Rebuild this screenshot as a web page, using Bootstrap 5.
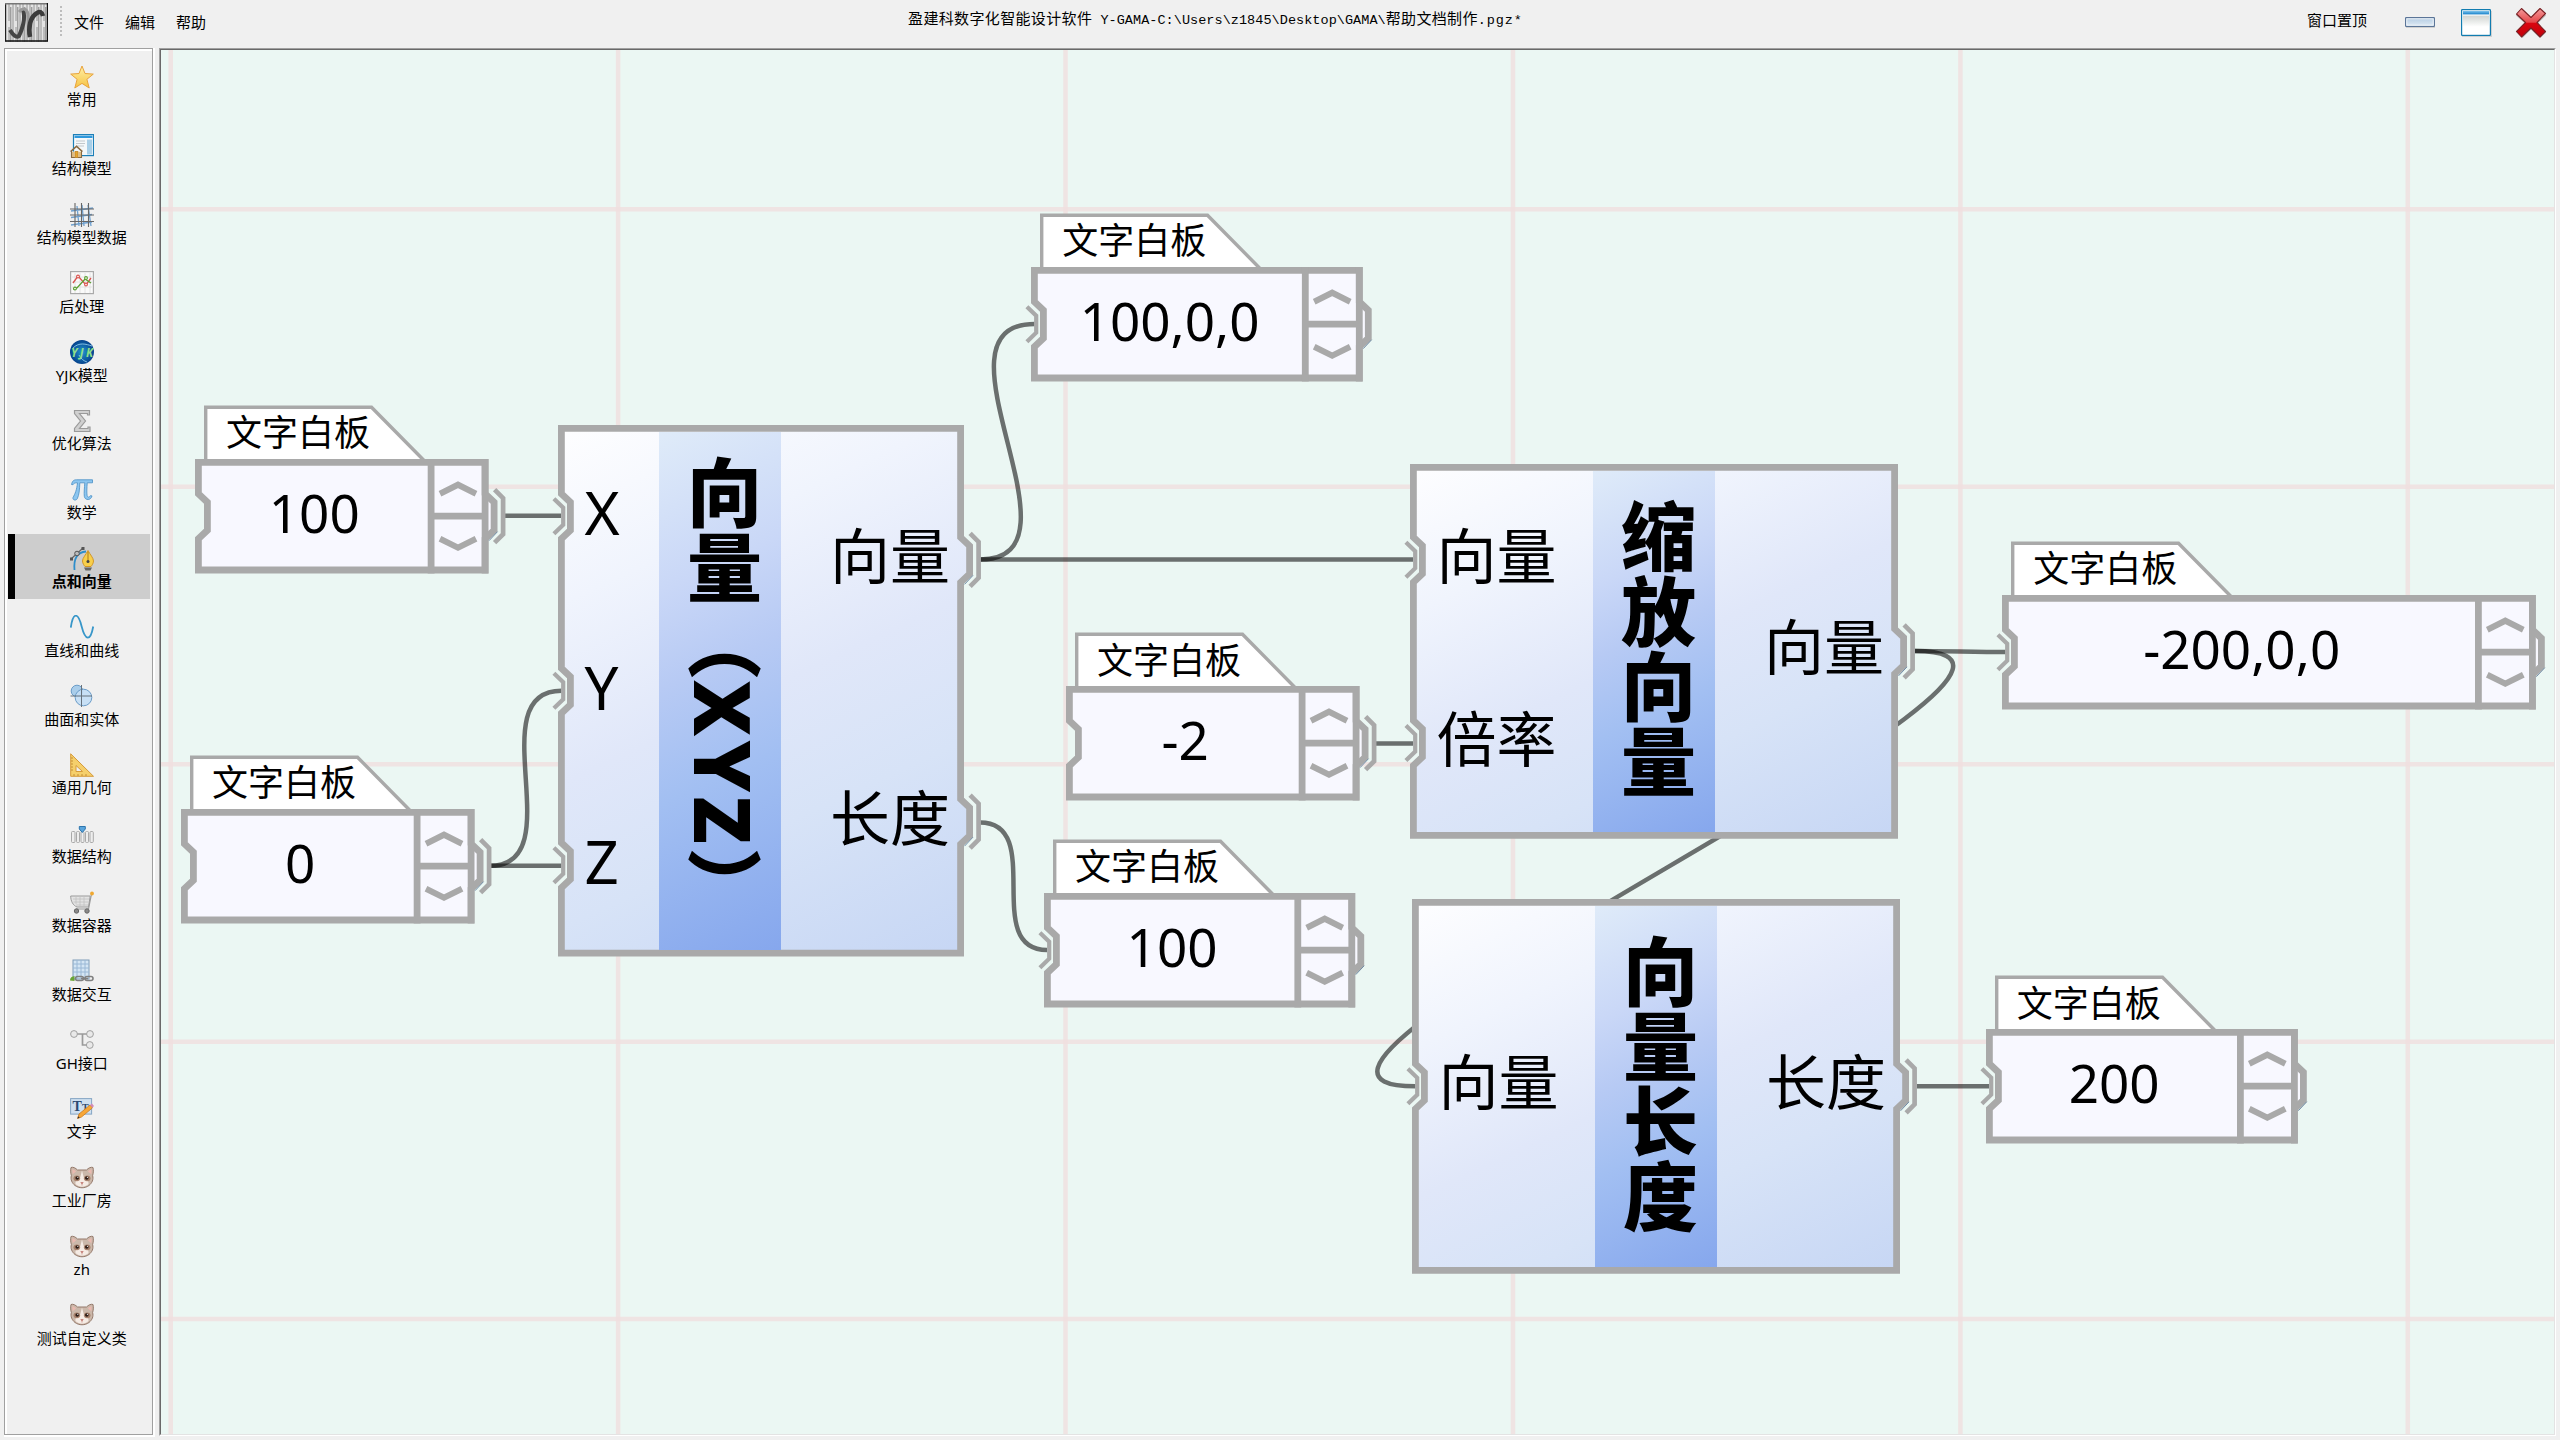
<!DOCTYPE html>
<html lang="zh-CN">
<head>
<meta charset="utf-8">
<meta name="viewport" content="width=device-width, initial-scale=1">
<title>Y-GAMA</title>
<link rel="stylesheet" href="https://cdn.jsdelivr.net/npm/bootstrap@5.3.0/dist/css/bootstrap.min.css">
<style>
  body { background:#f0f0f0; color:#000; font-family:"Noto Sans","Noto Sans CJK SC",sans-serif; font-size:15px; line-height:16px; width:2560px; height:1440px; }
  .titlebar { height:48px; flex:none; padding:3px 10px 0 5px; }
  .app-logo { width:43px; height:39px; }
  .grip { width:2px; height:31px; margin:3px 12px 0 12px; background:repeating-linear-gradient(#bdbdbd 0 2px,transparent 2px 4px); }
  .menu-item { padding:11px 0 0; margin-right:21px; }
  .doc-title { flex:1; padding:9.5px 0 0 702px; font-family:"Liberation Mono","Noto Sans CJK SC",monospace; font-size:13.5px; letter-spacing:.05px; white-space:pre; }
  .doc-title .han { font-size:15px; letter-spacing:.35px; }
  .doc-title .ext { letter-spacing:.9px; }
  .pin-top { padding-top:9px; margin-right:37px; }
  .side-panel { width:149px; margin-left:4px; margin-bottom:5px; border:1px solid #a0a0a0; box-shadow:inset 1px 1px 0 1px #fff,1px 1px 0 1px #fff; padding:3.4px 2px 0 3px; }
  .side-item { height:64.8px; margin-bottom:4px; border-left:7px solid transparent; padding:12.6px 1.5px 0 0; flex:none; white-space:nowrap; }
  .side-item svg { width:24px; height:24px; margin-bottom:2.4px; }
  .side-item.active { background:#cdcdcd; border-left-color:#000; font-weight:700; }
  .board-frame { margin:0 4px 4px 6px; border:1px solid; border-color:#a0a0a0 #fff #fff #a0a0a0; flex:1; }
  .board-canvas { border:1px solid; border-color:#696969 #e3e3e3 #e3e3e3 #696969; background:#ebf7f3; overflow:hidden; position:relative; height:100%; }
  .wires { position:absolute; inset:0; width:100%; height:100%; }
  .gnode { position:absolute; font-size:60px; line-height:64px; }
  .gnode > svg { position:absolute; left:0; top:0; width:100%; height:100%; overflow:visible; }
  .gnode .layer { position:relative; height:100%; }
  .gnode .port-col { padding:0 14px 8px 26.5px; }
  .gnode .band { width:122px; margin:6.8px 0; background:linear-gradient(155deg,#dfebf9,#c9d7f7 28%,#b7caf4 45%,#a2bff2 65%,#86a7ed); writing-mode:vertical-rl; font-family:"Noto Sans CJK SC",sans-serif; font-weight:900; font-size:75px; line-height:122px; padding-bottom:5px; }
  .gnode .band span { position:relative; left:4px; }
  .gnode .band .latin { left:0; font-family:"Noto Sans",sans-serif; font-size:78px; letter-spacing:4px; line-height:1; }
  .tnode-tab { position:absolute; left:31px; top:-50.5px; line-height:50px; font-size:36px; white-space:nowrap; }
  .tnode-value { font-size:53px; line-height:60px; padding-bottom:6px; margin-right:55px; }
</style>
</head>
<body class="d-flex flex-column overflow-hidden">

<header class="titlebar d-flex align-items-start">
  <svg class="app-logo" viewBox="0 0 43 39">
    <defs><pattern id="brush" width="7" height="39" patternUnits="userSpaceOnUse"><path d="M1 0V39M4 0V18M4 24V39" stroke="#8c8c8c" stroke-width=".9"/><path d="M5.8 4V39" stroke="#555" stroke-width=".7"/></pattern></defs>
    <rect width="43" height="39" fill="#e4e4e4"/><rect width="43" height="39" fill="url(#brush)"/>
    <path d="M18 7c3 8-1 20-4 26-3 2-6-1-9-6" fill="none" stroke="#444" stroke-width="4"/>
    <path d="M14 9c4-5 8-3 9 2l1 21" fill="none" stroke="#999" stroke-width="3"/>
    <path d="M25 34c-2-9 0-20 7-24 3-2 5-1 6 3" fill="none" stroke="#3c3c3c" stroke-width="4.5"/>
    <path d="M.5 38V.5" stroke="#222" stroke-width="1"/><path d="M0 .7H43" stroke="#777" stroke-width="1.6"/><path d="M42.5 0V38H0" fill="none" stroke="#111" stroke-width="1.4"/>
  </svg>
  <div class="grip"></div>
  <nav class="d-flex">
    <span class="menu-item">文件</span><span class="menu-item">编辑</span><span class="menu-item me-0">帮助</span>
  </nav>
  <div class="doc-title"><span class="han">盈建科数字化智能设计软件</span> Y-GAMA-C:\Users\z1845\Desktop\GAMA\<span class="han">帮助文档制作</span><span class="ext">.pgz*</span></div>
  <span class="pin-top">窗口置顶</span>
  <svg width="146" height="42" viewBox="2404 3 146 42">
    <defs>
      <linearGradient id="gMin" x2="0" y2="1"><stop stop-color="#b3cbe2"/><stop offset="1" stop-color="#dfeaf5"/></linearGradient>
      <linearGradient id="gWin" x2="0" y2="1"><stop stop-color="#d0d4d1"/><stop offset=".6" stop-color="#fff"/></linearGradient>
      <linearGradient id="gBar" x2="0" y2="1"><stop stop-color="#7fc4ee"/><stop offset="1" stop-color="#1480c8"/></linearGradient>
      <linearGradient id="gX" x2="0" y2="1"><stop stop-color="#f49a9a"/><stop offset=".48" stop-color="#e5474a"/><stop offset=".52" stop-color="#d90510"/><stop offset="1" stop-color="#c2000a"/></linearGradient>
    </defs>
    <rect x="2406" y="18.5" width="29" height="9.5" fill="#bbb" opacity=".6"/>
    <rect x="2405.6" y="17.6" width="28.8" height="8.8" rx=".6" fill="url(#gMin)" stroke="#5b7598" stroke-width="1.2"/><rect x="2406.8" y="18.8" width="26.4" height="6.4" fill="none" stroke="#f3f8fc" stroke-width=".9"/>
    <rect x="2462" y="11" width="30" height="26" fill="#bbb" opacity=".6"/>
    <rect x="2461.6" y="9.6" width="28.8" height="25.8" rx=".6" fill="#fff" stroke="#127cb0" stroke-width="1.2"/><rect x="2463" y="11" width="26" height="3.4" fill="url(#gBar)"/><rect x="2463" y="15.6" width="26" height="18.6" fill="url(#gWin)"/>
    <path d="M2522.5 9.500L2531 18l9-8.500 6 6-8.800 8.500 8.800 8.500-6 5.500-9-8.500-8.500 8.500-6.500-6 9-8.500-9-8z" fill="#888" opacity=".5"/>
    <path d="M2521.500 8.500L2531 17.500l9-9 5.500 5-8.500 9 8.500 9-5.500 5.500-9-9-9.500 9-5-5.500 9-9-9-8.500z" fill="url(#gX)" stroke="#7a2024" stroke-width="1.100" stroke-linejoin="round"/>
  </svg>
</header>

<main class="d-flex flex-fill">
  <aside class="side-panel d-flex flex-column flex-shrink-0">
    <div class="side-item d-flex flex-column align-items-center"><svg viewBox="0 0 24 24"><defs><linearGradient id="gStar" x2="0" y2="1"><stop stop-color="#fff0a8"/><stop offset="1" stop-color="#f6c343"/></linearGradient></defs><path d="M12 1l3 7.500 8.300.6-6.400 5.200 2.300 8.700-7.200-4.600L4.800 23l2.300-8.700L.7 9.100 9 8.500z" fill="url(#gStar)" stroke="#e8a33d" stroke-linejoin="round"/></svg><span>常用</span></div>
    <div class="side-item d-flex flex-column align-items-center"><svg viewBox="0 0 24 24"><rect x="3.500" y=".6" width="20" height="21" fill="#f5f8fa" stroke="#1c7fb8" stroke-width="1.200"/><path d="M4.500 2.800h18" stroke="#2f98dc" stroke-width="2.400"/><rect x="17" y="5.500" width="5" height="15" fill="#a8cfe8"/><path d="M6 7h9M6 9.500h9M6 12h8" stroke="#c3c8cc"/><path d="M.5 17.500L6.500 12l6 5.500M1.500 17v6.500h10V17L6.500 12.500z" fill="#f3e3c4" stroke="#8a6a42" stroke-width="1.100"/><path d="M5 23.500v-6h3v6M3 18v5M10 18v5" fill="#e5a530" stroke="#c08426" stroke-width=".8"/></svg><span>结构模型</span></div>
    <div class="side-item d-flex flex-column align-items-center"><svg viewBox="0 0 24 24"><g fill="none" stroke="#6ea0cf" stroke-width="1.300"><path d="M1 8l22-3M1 14.500l21-3M1 22l21-3M7 3l2 20M12 2l2 21M18 2l3 21"/></g><g fill="none" stroke="#666" stroke-width="1.100"><path d="M0 6h24M0 12h24M0 18.500h24M5 0v24M11.500 0v24M18.500 0v24"/></g></svg><span>结构模型数据</span></div>
    <div class="side-item d-flex flex-column align-items-center"><svg viewBox="0 0 24 24"><rect x=".6" y=".6" width="22.800" height="22" fill="#fafafa" stroke="#aaa" stroke-width="1.200"/><path d="M5 2v20M10 2v20M15 2v20M20 2v20M2 6h20M2 11h20M2 16h20" stroke="#ddd" stroke-width=".8"/><path d="M3 12l5-7 8 9 5-7" fill="none" stroke="#d9534f" stroke-width="1.300"/><path d="M3 18l4-1 8-9 6 4" fill="none" stroke="#5a9e30" stroke-width="1.300"/><g fill="#fff" stroke-width="1.100"><g stroke="#d9534f"><circle cx="8" cy="5.500" r="1.400"/><circle cx="16" cy="13.500" r="1.400"/></g><g stroke="#5a9e30"><circle cx="5" cy="17.500" r="1.400"/><circle cx="16" cy="7" r="1.400"/></g></g></svg><span>后处理</span></div>
    <div class="side-item d-flex flex-column align-items-center"><svg viewBox="0 0 24 24"><defs><radialGradient id="gYjk"><stop stop-color="#2196cf"/><stop offset="1" stop-color="#05428c"/></radialGradient></defs><circle cx="12" cy="12" r="12" fill="url(#gYjk)"/><path d="M3 8C9 2 16 4 22 6M9 15c2 4 5 6 8 7" fill="none" stroke="#8ec8ea" stroke-width=".9"/><text x="12" y="16.600" text-anchor="middle" font-family="Noto Sans" font-size="11.500" font-weight="700" font-style="italic" fill="#8fe08a" textLength="22">YJK</text></svg><span>YJK模型</span></div>
    <div class="side-item d-flex flex-column align-items-center"><svg viewBox="0 0 24 24"><path d="M4.500 1.500h15v4.500h-2V4.500H9.500L15.500 12l-6 7.500h8.500V18h2v4.500h-15.500v-3l6-7.500-6-7.500z" fill="#d0d0d0" stroke="#9a9a9a" stroke-width="1.200"/></svg><span>优化算法</span></div>
    <div class="side-item d-flex flex-column align-items-center"><svg viewBox="0 0 24 24"><path d="M1.500 6.500C2.500 2.500 4 1.800 6.500 1.800h16v3h-5.300c-.3 5-.6 10-.1 12.700.4 2 2 2.200 3.200.2l1.700.2c-.8 4.500-7 5-7.700.4-.4-3.500.2-9 .5-13.500H9.800C9.600 12 9 17 7.300 20.700c-1.300 2.300-5 1.500-4.300-1.200C5 16 6.800 12 7.500 4.800 5 4.700 4 5 3 6.700z" fill="#8cc6f0" stroke="#5596c8" stroke-width=".9"/></svg><span>数学</span></div>
    <div class="side-item active d-flex flex-column align-items-center"><svg viewBox="0 0 24 24"><path d="M4.500 23C3.500 12 7 5 16 4.500" fill="none" stroke="#2e8ecb" stroke-width="1.800"/><path d="M1 12L13 1" stroke="#666" stroke-width="1.200"/><path d="M0 10.500h3v3H0zM11.500 0h3v3h-3z" fill="#555"/><circle cx="7" cy="6.500" r="2.300" fill="#bbb" stroke="#555"/><path d="M18 3.500c2 4 5.500 7.500 5.500 10.500 0 2.500-2 5-2.500 5.500h-6c-.5-.5-2.500-3-2.500-5.500 0-3 3.500-6.500 5.500-10.500z" fill="#f8cf4a" stroke="#d1962a"/><path d="M18 5v9" stroke="#a97a1c"/><circle cx="18" cy="14.500" r="1.500" fill="#444"/><path d="M14 20.500h8l-1.500 3h-5z" fill="#666"/></svg><span>点和向量</span></div>
    <div class="side-item d-flex flex-column align-items-center"><svg viewBox="0 0 24 24"><path d="M.8 12.500C3-3 8-3 11.500 11c4 15.500 9 15.500 11.700.5" fill="none" stroke="#3796c9" stroke-width="1.800"/></svg><span>直线和曲线</span></div>
    <div class="side-item d-flex flex-column align-items-center"><svg viewBox="0 0 24 24"><circle cx="7" cy="7" r="5.800" fill="#a9cdea" stroke="#6a9cc8"/><circle cx="13.500" cy="13.500" r="8.300" fill="#c3def5" fill-opacity=".9" stroke="#6a9cc8"/><path d="M.5 12h21.500M11.500 1v22" stroke="#67727c" stroke-width="1"/></svg><span>曲面和实体</span></div>
    <div class="side-item d-flex flex-column align-items-center"><svg viewBox="0 0 24 24"><path d="M.7.8L23.500 23.300H.7zM6 12.500v6h6.500z" fill="#f5cf6b" fill-rule="evenodd" stroke="#d59a3a" stroke-linejoin="round"/><path d="M1 5h2M1 8h2M1 11h2M1 14h2M1 17h2M4 23v-2M8 23v-2M12 23v-2M16 23v-2" stroke="#b98028" stroke-width=".8"/></svg><span>通用几何</span></div>
    <div class="side-item d-flex flex-column align-items-center"><svg viewBox="0 0 24 24"><g fill="#eee" stroke="#a9a9a9"><rect x="1.500" y="9.500" width="3.500" height="11" rx="1"/><rect x="6.500" y="9.500" width="3" height="11" rx="1"/><rect x="11" y="9.500" width="3" height="11" rx="1"/><rect x="15.500" y="9.500" width="3" height="11" rx="1"/><rect x="20" y="9.500" width="3.300" height="11" rx="1"/></g><path d="M9.300 4.500h6V7l-3 3.500-3-3.500z" fill="#5aa5dc" stroke="#2d75ad"/></svg><span>数据结构</span></div>
    <div class="side-item d-flex flex-column align-items-center"><svg viewBox="0 0 24 24"><path d="M.7 5h19.500l-1.700 11H7C3 14.500.7 10 .7 5z" fill="#e3e3e3" stroke="#9b9b9b"/><path d="M3 8h16M3.500 11h15M6 14h12M6 5v8M10 5v10M14 5v10" stroke="#c2c2c2" stroke-width=".8"/><path d="M21.500 3l-3 15H6" fill="none" stroke="#999" stroke-width="1.200"/><circle cx="22" cy="2.500" r="1.900" fill="#f0a830"/><g fill="#8a8a8a" stroke="#666"><circle cx="6.500" cy="20" r="2.200"/><circle cx="17" cy="20" r="2.200"/></g></svg><span>数据容器</span></div>
    <div class="side-item d-flex flex-column align-items-center"><svg viewBox="0 0 24 24"><rect x="3" y="1" width="16" height="19" fill="#d3e5f4" stroke="#7e9cb8"/><path d="M7 1v19M11 1v19M15 1v19M3 5h16M3 9h16M3 13h16" stroke="#9ab8d6"/><path d="M0 21.500c0-3 2-4 4.500-4.500v5z" fill="#69a534"/><g fill="none" stroke="#808080" stroke-width="1.600"><rect x="5.500" y="17.500" width="8" height="4" rx="2"/><rect x="15" y="17.500" width="8" height="4" rx="2"/><path d="M11 19.500h7"/></g></svg><span>数据交互</span></div>
    <div class="side-item d-flex flex-column align-items-center"><svg viewBox="0 0 24 24"><path d="M4 6h16M12.500 6v11h7" fill="none" stroke="#9a9a9a" stroke-width="1.700"/><g fill="#e9e9e9" stroke="#a0a0a0"><circle cx="4" cy="6" r="3.400"/><circle cx="20" cy="6" r="3.400"/><circle cx="19.800" cy="17" r="3.400"/></g></svg><span>GH接口</span></div>
    <div class="side-item d-flex flex-column align-items-center"><svg viewBox="0 0 24 24"><rect x=".6" y="1.600" width="21" height="15.500" fill="#cfe0f0" stroke="#86a6c4"/><text x="2.500" y="14" font-family="Liberation Serif" font-weight="700" font-size="14" fill="#2d4a70">T</text><text x="12" y="14" font-family="Liberation Serif" font-weight="700" font-size="10" fill="#2d4a70">T</text><path d="M7.500 21.500l1.500-4.500L20 8l2.500 2.800-11 9.200z" fill="#f7a636" stroke="#c87a20" stroke-width=".8"/><path d="M20 8l2-1.600 2 2.600-1.500 1.800z" fill="#d48ab8"/><path d="M7.500 21.500l.8-2.200 1.400 1.400z" fill="#333"/></svg><span>文字</span></div>
    <div class="side-item d-flex flex-column align-items-center"><svg viewBox="0 0 24 24"><g id="cat"><path d="M1 1.500c2-.8 4.500.5 6.500 2.500h9C18.500 2 21 .7 23 1.500c.7 3 .3 6-.4 8 1.200 4-.6 7.500-3.600 10-4 3-10 3-14 0C2 17 .2 13.500 1.400 9.500.7 7.500.3 4.500 1 1.500z" fill="#cbb8aa" stroke="#95796b"/><path d="M2.300 3.200c1.500 0 2.700 1 3.700 2.200L2.600 8.200zM21.700 3.200c-1.500 0-2.700 1-3.700 2.200l3.400 2.800z" fill="#eab9b0"/><path d="M12 4.500l1.800 7c3 1.500 5.200 4 4.700 6.500-3.500 3.500-9.500 3.500-13 0-.5-2.500 1.700-5 4.700-6.500z" fill="#f5ebe4"/><ellipse cx="6.800" cy="12.300" rx="3.300" ry="2.900" fill="#a8826d"/><ellipse cx="17.200" cy="12.300" rx="3.300" ry="2.900" fill="#a8826d"/><circle cx="7.200" cy="12" r="1.800" fill="#2b1b15"/><circle cx="16.800" cy="12" r="1.800" fill="#2b1b15"/><circle cx="7.800" cy="11.300" r=".6" fill="#fff"/><circle cx="17.400" cy="11.300" r=".6" fill="#fff"/><path d="M10.800 16.500h2.400L12 18zM12 18v1.500" fill="#d98880" stroke="#b56a62" stroke-width=".6"/></g></svg><span>工业厂房</span></div>
    <div class="side-item d-flex flex-column align-items-center"><svg viewBox="0 0 24 24"><use href="#cat"/></svg><span>zh</span></div>
    <div class="side-item d-flex flex-column align-items-center"><svg viewBox="0 0 24 24"><use href="#cat"/></svg><span>测试自定义类</span></div>
  </aside>

  <section class="board-frame">
    <div class="board-canvas" id="canvas">
      <svg class="wires" id="wires" fill="none"></svg>
    </div>
  </section>
</main>

<script src="https://cdn.jsdelivr.net/npm/bootstrap@5.3.0/dist/js/bootstrap.bundle.min.js"></script>
<script>
// Canvas origin inside the window; all coordinates below are window coordinates.
const OX = 161, OY = 50, B = 3.4, GREY = '#a9a9a9';
const canvas = document.getElementById('canvas');

// Outline of a node with notches for inputs (left) and bumps for outputs (right).
function outline(w, h, ins, outs) {
  const l = B, r = w - B;
  let d = `M${l} ${B}H${r}`;
  outs.forEach(y => d += `V${y - 22.5}L${r + 9} ${y - 14}V${y + 14}L${r} ${y + 22.5}`);
  d += `V${h - B}H${l}`;
  [...ins].reverse().forEach(y => d += `V${y + 22.5}L${l + 9} ${y + 14}V${y - 14}L${l} ${y - 22.5}`);
  return d + 'Z';
}
const plugIn = y => `<path d="M${B - 7.5} ${y - 17.5}L${B + 1.8} ${y - 8.5}V${y + 8.5}L${B - 7.5} ${y + 17.5}" fill="none" stroke="${GREY}" stroke-width="4.200"/>`;
const plugOut = (w, y) => `<path d="M${w - B + 9.5} ${y - 26.5}L${w - B + 18} ${y - 18}V${y + 18}L${w - B + 9.5} ${y + 26.5}" fill="none" stroke="${GREY}" stroke-width="4.700"/>`;
const shade = (w, y) => `<path d="M${w + 9} ${y + 15.5}L${w + .5} ${y + 24.5}" stroke="#708ba5" stroke-width="1"/>`;

const blocks = [
  { x:558, y:425.2, w:406, h:531.5, band:101, ins:['X','Y','Z'], outs:['向量','长度'], name:'向量（<span class="latin">XYZ</span>）' },
  { x:1410, y:464, w:488, h:374.7, band:183, ins:['向量','倍率'], outs:['向量'], name:'缩放向量' },
  { x:1412, y:899, w:488, h:374.7, band:183, ins:['向量'], outs:['长度'], name:'向量长度' }
];
const boards = [
  { x:195, y:458.5, w:293.5, text:'100', out:1 },
  { x:181, y:808.6, w:293.5, text:'0', out:1 },
  { x:1031.3, y:266.7, w:331.7, text:'100,0,0', in:1 },
  { x:1066, y:686.3, w:293.5, text:'-2', out:1 },
  { x:1044, y:892.7, w:311.2, text:'100', in:1 },
  { x:2002.3, y:594.7, w:533.8, text:'-200,0,0', in:1 },
  { x:1985.8, y:1029, w:311.8, text:'200', in:1 }
];

function place(x, y, w, h, html) {
  const el = document.createElement('div');
  el.className = 'gnode';
  el.style.cssText = `left:${x - OX}px;top:${y - OY}px;width:${w}px;height:${h}px`;
  el.innerHTML = html;
  canvas.append(el);
}

blocks.forEach((n, i) => {
  const at = k => Array.from({ length: k }, (_, j) => 4 + (n.h - 8) * (j + .5) / k);
  const ins = at(n.ins.length), outs = at(n.outs.length);
  const a = 155 * Math.PI / 180, s = Math.sin(a), c = -Math.cos(a), L = (n.w * s + n.h * c) / 2;
  place(n.x, n.y, n.w, n.h, `
    <svg><defs><linearGradient id="body${i}" gradientUnits="userSpaceOnUse" x1="${n.w/2 - s*L}" y1="${n.h/2 - c*L}" x2="${n.w/2 + s*L}" y2="${n.h/2 + c*L}">
      <stop stop-color="#fefeff"/><stop offset=".25" stop-color="#f0f4fd"/><stop offset=".5" stop-color="#e0e7f9"/><stop offset=".7" stop-color="#d7e3f7"/><stop offset="1" stop-color="#c6d6f4"/></linearGradient></defs>
      <path d="${outline(n.w, n.h, ins, outs)}" fill="url(#body${i})" stroke="${GREY}" stroke-width="6.800"/>
      ${ins.map(plugIn).join('')}${outs.map(y => shade(n.w, y) + plugOut(n.w, y)).join('')}</svg>
    <div class="layer d-flex">
      <div class="port-col d-flex flex-column" style="width:${n.band}px">${n.ins.map(t => `<div class="flex-fill d-flex align-items-center text-nowrap">${t}</div>`).join('')}</div>
      <div class="band d-flex justify-content-center text-nowrap"><span>${n.name}</span></div>
      <div class="port-col d-flex flex-column flex-fill">${n.outs.map(t => `<div class="flex-fill d-flex align-items-center justify-content-end text-nowrap">${t}</div>`).join('')}</div>
    </div>`);
});

boards.forEach(n => {
  const h = 114.4, w = n.w, m = h / 2, dx = w - 57.4, ax = w - 48.5;
  place(n.x, n.y, w, h, `
    <svg><path d="M10.700 2V-51.800H176.500L229.500 2" fill="#fff" stroke="${GREY}" stroke-width="3.400"/>
      <path d="${outline(w, h, [m], [m])}" fill="#f8f8ff" stroke="${GREY}" stroke-width="6.800"/>
      ${shade(w, m)}
      <path d="M${w - B} 0V${h}M${dx} 0V${h}M${dx} ${m}H${w}" stroke="${GREY}" stroke-width="6.800"/>
      <path d="M${ax} ${m - 22.5}l18 -9 18 9M${ax} ${m + 22.5}l18 9 18 -9" fill="none" stroke="${GREY}" stroke-width="6"/>
      ${n.in ? plugIn(m) : ''}${n.out ? plugOut(w, m) : ''}</svg>
    <div class="tnode-tab">文字白板</div>
    <div class="layer tnode-value d-flex align-items-center justify-content-center">${n.text}</div>`);
});

// Grid lines and links
let g = '';
for (let i = 0; i < 6; i++) g += `<path d="M${170.7 + 447.42 * i - OX} 0V1400"/>`;
for (let i = 0; i < 5; i++) g += `<path d="M0 ${209.3 + 277.45 * i - OY}H2400"/>`;
const links = [
  [504,515.7,561,515.7,20], [490,865.8,561.5,690.8,83], [490,865.8,561.5,865.8,20],
  [980,559.5,1034.7,324,114], [980,559.5,1413,559.5,100], [980,822.4,1047,949.9,66],
  [1376,743.6,1413,743.6,10], [1915,651,2005.6,652,30], [1915,651,1415.5,1086.3,240], [1917,1086.3,1989,1086.3,20]
];
document.getElementById('wires').innerHTML =
  `<g stroke="#f0dede" stroke-opacity=".8" stroke-width="4.500">${g}</g><g stroke="#000" stroke-opacity=".55" stroke-width="4.500" transform="translate(${-OX} ${-OY})">` +
  links.map(([a, b, c, d, k]) => `<path d="M${a} ${b}C${a + k} ${b} ${c - k} ${d} ${c} ${d}"/>`).join('') + '</g>';
</script>
</body>
</html>
